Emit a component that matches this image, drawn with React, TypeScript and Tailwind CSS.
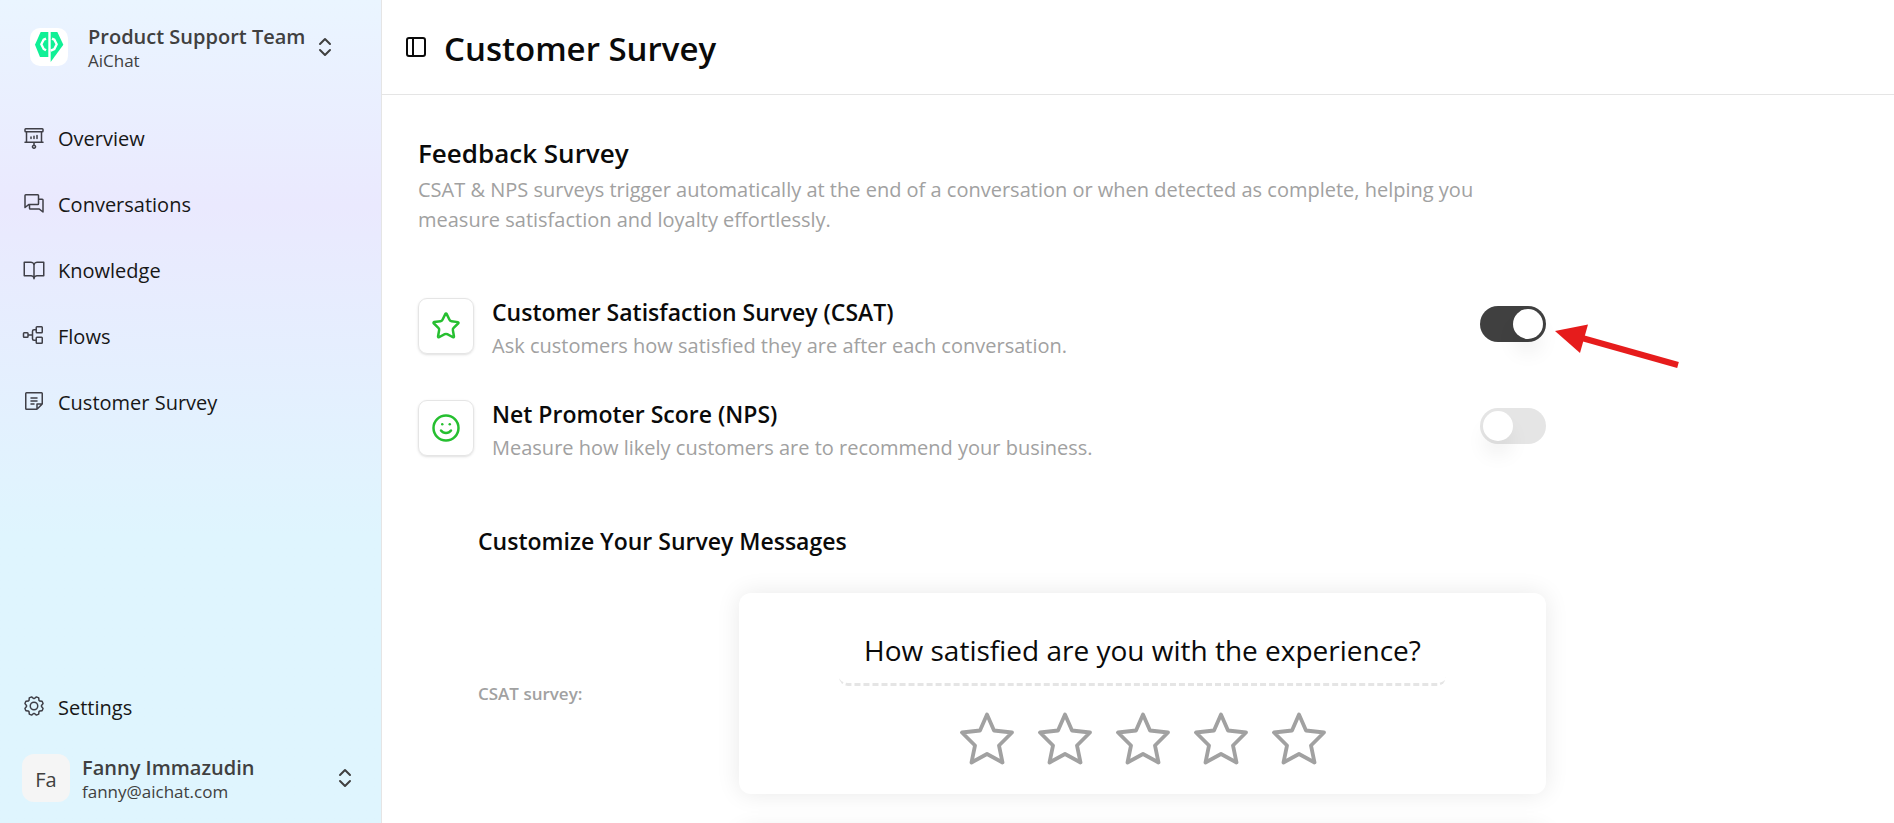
import { useState } from 'react';
import type { ComponentType } from 'react';
import { ChevronsUpDown, PanelLeft, Smile, Star } from 'lucide-react';
import {
  PiBookOpen,
  PiChats,
  PiGear,
  PiNote,
  PiProjectorScreenChart,
  PiTreeStructure,
} from 'react-icons/pi';

type Icon = ComponentType<{ className?: string }>;

const navItems: { label: string; icon: Icon }[] = [
  { label: 'Overview', icon: PiProjectorScreenChart },
  { label: 'Conversations', icon: PiChats },
  { label: 'Knowledge', icon: PiBookOpen },
  { label: 'Flows', icon: PiTreeStructure },
  { label: 'Customer Survey', icon: PiNote },
];

function Logo() {
  return (
    <svg viewBox="0 0 114 114" className="size-[38px] shrink-0 rounded-[10px] bg-white" aria-hidden="true">
      <path d="M32 12H55V87H30L15 50Z" fill="#10f096" />
      <path d="M62 12H82L100 50L62 102Z" fill="#10f096" />
      <path d="M48 32L41 35L34 49L41 63L48 67" fill="none" stroke="#fff" strokeWidth="7" />
      <path d="M66 32L73 35L80 49L73 63L62 68" fill="none" stroke="#fff" strokeWidth="7" />
    </svg>
  );
}

function NavLink({ label, icon: ItemIcon }: { label: string; icon: Icon }) {
  return (
    <a href="#" className="flex h-12 items-center gap-3 text-xl text-neutral-900">
      <ItemIcon className="size-6 shrink-0 text-zinc-700" />
      <span className="pt-1">{label}</span>
    </a>
  );
}

function Sidebar() {
  return (
    <aside className="flex w-[382px] shrink-0 flex-col border-r border-neutral-200 bg-linear-to-b from-[#eaf5ff] via-[#eae9fe] via-25% to-[#dff5fe] to-65% px-[22px] pt-[23px] pb-[21px]">
      <button type="button" className="flex h-12 items-center gap-5 pl-2 text-left text-neutral-700">
        <Logo />
        <span className="flex items-center gap-2">
          <span className="flex flex-col pt-1">
            <span className="text-xl leading-6 font-semibold">Product Support Team</span>
            <span className="text-[17px] leading-6">AiChat</span>
          </span>
          <ChevronsUpDown className="size-6" />
        </span>
      </button>
      <nav className="mt-[42px] flex flex-1 flex-col gap-[18px]">
        {navItems.map((item) => (
          <NavLink key={item.label} {...item} />
        ))}
      </nav>
      <NavLink label="Settings" icon={PiGear} />
      <button type="button" className="mt-6 flex h-12 items-center gap-3 pr-0.5 text-left text-neutral-700">
        <span className="flex size-12 items-center justify-center rounded-xl bg-neutral-100 pt-1 text-xl">Fa</span>
        <span className="flex flex-1 flex-col pt-1">
          <span className="text-xl leading-6 font-semibold">Fanny Immazudin</span>
          <span className="text-[17px] leading-6">fanny@aichat.com</span>
        </span>
        <ChevronsUpDown className="size-6" />
      </button>
    </aside>
  );
}

function Arrow() {
  return (
    <svg viewBox="0 0 130 50" className="pointer-events-none absolute top-4 left-[72px] h-[50px] w-[130px]" aria-hidden="true">
      <path d="M3 9L36 2.5L28 31Z" fill="#e61c1c" />
      <path d="M30 16L126 43" stroke="#e61c1c" strokeWidth="6" />
    </svg>
  );
}

type SurveyToggleProps = {
  id: string;
  title: string;
  description: string;
  icon: Icon;
  initial: boolean;
  pointed?: boolean;
};

function SurveyToggle({ id, title, description, icon: RowIcon, initial, pointed }: SurveyToggleProps) {
  const [on, setOn] = useState(initial);
  return (
    <div className="flex items-start gap-[18px]">
      <span className="flex size-14 shrink-0 items-center justify-center rounded-[9px] border border-neutral-200 shadow-sm">
        <RowIcon className="size-[30px] text-[#26bf30]" />
      </span>
      <div className="flex-1">
        <label htmlFor={id} className="block text-[23px] leading-7 font-semibold">
          {title}
        </label>
        <p className="mt-[5px] text-xl leading-[30px] text-neutral-400">{description}</p>
      </div>
      <span className="relative mt-2 flex">
        <input
          id={id}
          type="checkbox"
          role="switch"
          checked={on}
          onChange={(event) => setOn(event.target.checked)}
          className="flex h-9 w-[66px] cursor-pointer appearance-none rounded-full bg-neutral-200 p-[3px] before:size-[30px] before:rounded-full before:bg-white before:shadow-[0_15px_22px_-4px_rgba(0,0,0,0.1)] checked:justify-end checked:bg-neutral-700"
        />
        {pointed && <Arrow />}
      </span>
    </div>
  );
}

function RatingStar({ value }: { value: number }) {
  return (
    <button type="button" aria-label={`${value} of 5`} className="text-neutral-400">
      <svg viewBox="0 0 54 54" className="size-[54px]" fill="none" stroke="currentColor" strokeWidth="3.8" strokeLinejoin="round">
        <path d="M27 2.5L34 18.5L52 20.5L39 33.5L42.500 50.500L27 42L11.500 50.500L15 33.500L2 20.500L20 18.500Z" />
      </svg>
    </button>
  );
}

export default function App() {
  const [question, setQuestion] = useState('How satisfied are you with the experience?');
  return (
    <div className="flex h-screen overflow-hidden bg-white font-['Open_Sans','Noto_Sans',sans-serif] text-neutral-950">
      <Sidebar />
      <div className="flex min-w-0 flex-1 flex-col">
        <header className="flex h-[95px] shrink-0 items-center gap-4 border-b border-neutral-200 px-[22px]">
          <button type="button" aria-label="Toggle sidebar">
            <PanelLeft className="size-6" />
          </button>
          <h1 className="pt-1 text-[33px] leading-10 font-semibold">Customer Survey</h1>
        </header>
        <main className="flex-1 overflow-hidden px-9 pt-9">
          <div className="max-w-[1128px]">
            <h2 className="text-[26px] leading-[44px] font-semibold">Feedback Survey</h2>
            <p className="text-xl leading-[30px] text-neutral-400">
              CSAT &amp; NPS surveys trigger automatically at the end of a conversation or when detected as complete,
              helping you measure satisfaction and loyalty effortlessly.
            </p>
            <div className="mt-[63px] flex flex-col gap-[39px]">
              <SurveyToggle
                id="csat"
                title="Customer Satisfaction Survey (CSAT)"
                description="Ask customers how satisfied they are after each conversation."
                icon={Star}
                initial
                pointed
              />
              <SurveyToggle
                id="nps"
                title="Net Promoter Score (NPS)"
                description="Measure how likely customers are to recommend your business."
                icon={Smile}
                initial={false}
              />
            </div>
            <section className="mt-[62px] pl-[60px]">
              <h3 className="text-[23px] leading-8 font-semibold">Customize Your Survey Messages</h3>
              <div className="mt-9 flex flex-col gap-9">
                <div className="flex items-center">
                  <label htmlFor="question" className="w-[261px] shrink-0 text-[17px] font-semibold text-neutral-400">
                    CSAT survey:
                  </label>
                  <div className="flex flex-1 flex-col items-center gap-[26px] rounded-xl bg-white px-6 pt-6 pb-7 shadow-[0_0_24px_rgba(0,0,0,0.09)]">
                    <input
                      id="question"
                      type="text"
                      value={question}
                      onChange={(event) => setQuestion(event.target.value)}
                      className="h-[69px] w-4/5 rounded-[9px] border-b-3 border-dashed border-neutral-200 text-center text-[28px] outline-none"
                    />
                    <div className="flex gap-6">
                      {[1, 2, 3, 4, 5].map((value) => (
                        <RatingStar key={value} value={value} />
                      ))}
                    </div>
                  </div>
                </div>
                <div className="ml-[261px] h-[200px] rounded-xl bg-white shadow-[0_0_24px_rgba(0,0,0,0.09)]" />
              </div>
            </section>
          </div>
        </main>
      </div>
    </div>
  );
}
